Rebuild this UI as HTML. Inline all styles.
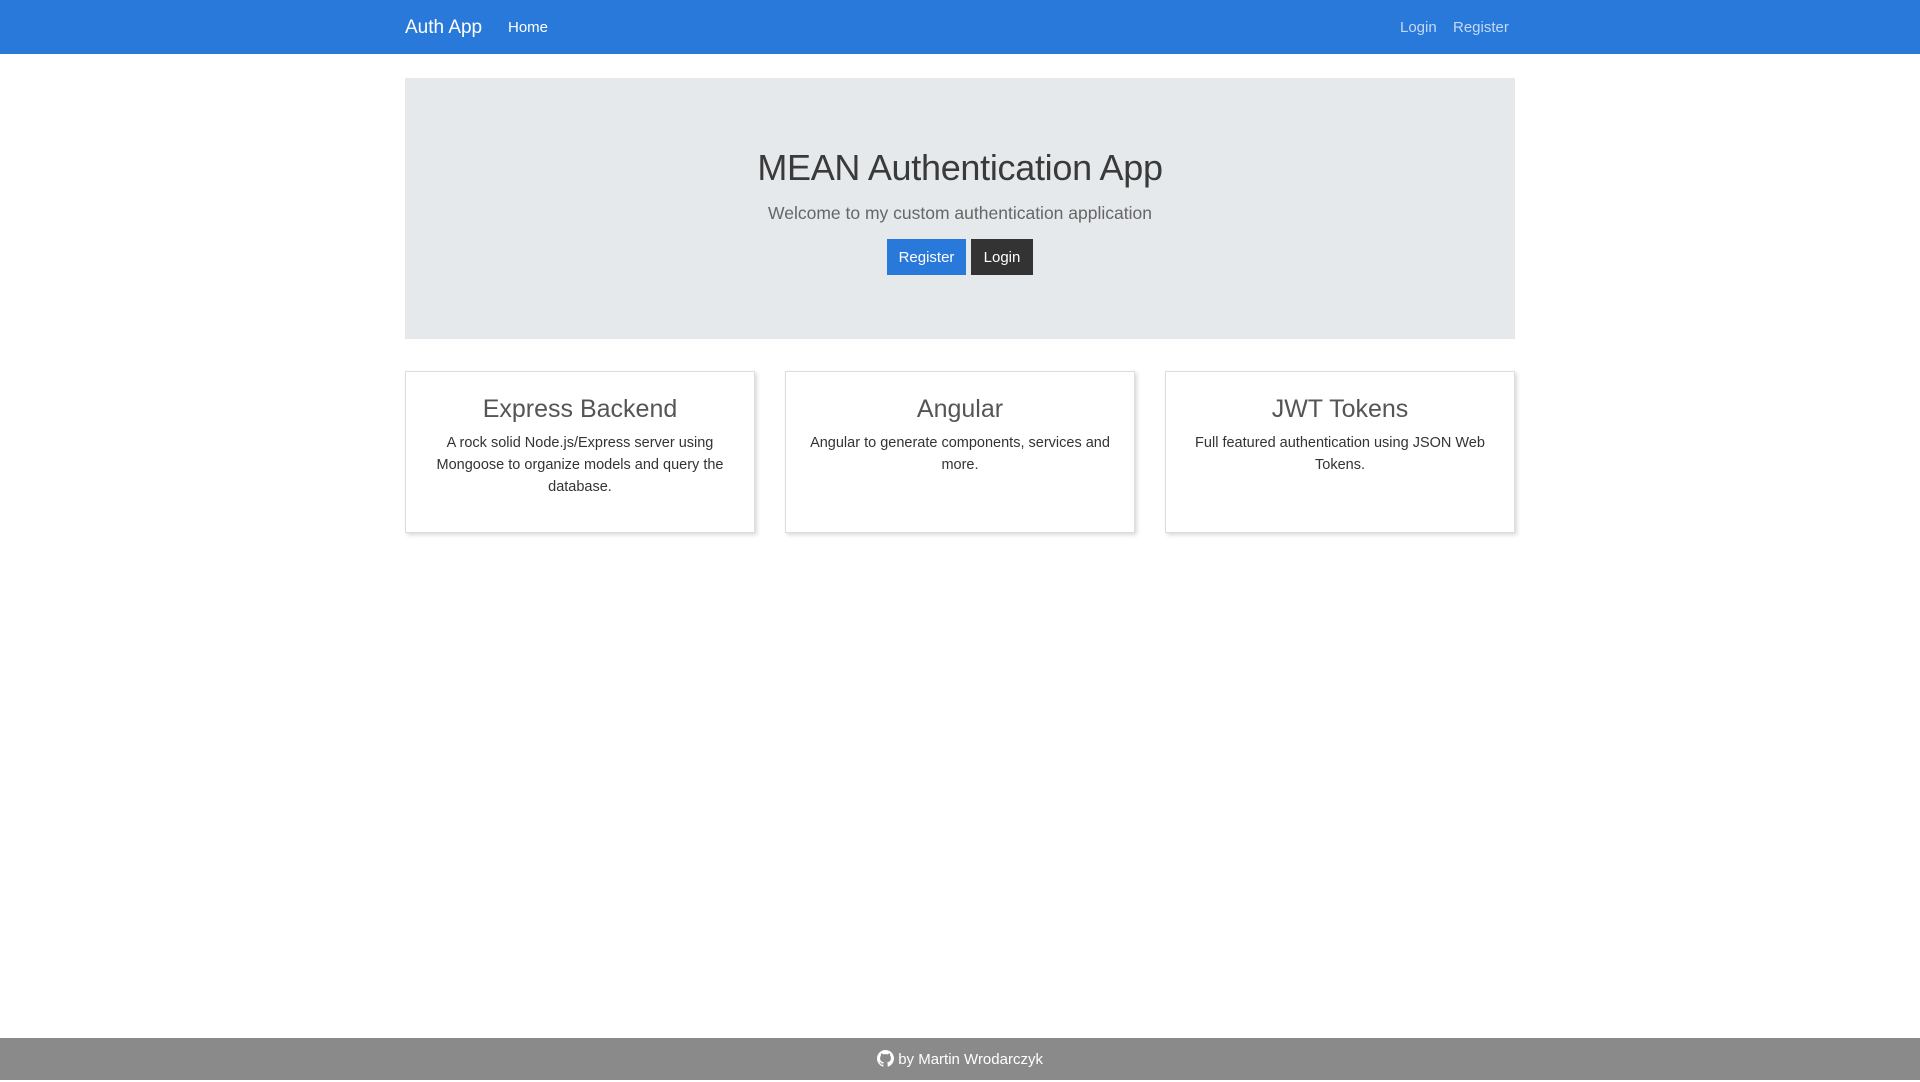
<!DOCTYPE html>
<html><head><meta charset="utf-8"><style>
*{box-sizing:border-box;margin:0;padding:0}
body{width:1920px;height:1080px;position:relative;background:#fff;font-family:"Liberation Sans",sans-serif;color:#333;overflow:hidden}
.nav{position:absolute;left:0;top:0;width:1920px;height:54px;background:#2979db}
.nav span{position:absolute;color:#fff;top:1px;line-height:54px}
.j{position:absolute;left:405px;top:78px;width:1110px;height:261px;background:#e6e9ec;text-align:center}
.j h1{font-weight:normal;font-size:36px;color:#3a3a3a;margin-top:69px;letter-spacing:-0.3px}
.j p{font-size:17.5px;color:#666;margin-top:14px}
.btn{position:absolute;top:161px;height:36px;line-height:37px;color:#fff;font-size:15px;text-align:center}
.card{position:absolute;top:371px;width:350px;height:162px;border:1px solid #ddd;box-shadow:2px 2px 4px rgba(0,0,0,.15);text-align:center;padding:0 22px}
.card h3{font-weight:normal;font-size:25px;color:#555;margin-top:23px}
.card p{font-size:14.5px;line-height:22px;margin-top:8px;color:#333}
.f{position:absolute;left:0;top:1038px;width:1920px;height:42px;background:#8a8a8a;color:#fff;font-size:15px;text-align:center;line-height:44px}
</style></head><body>
<div class="nav">
<span style="left:405px;font-size:19px">Auth App</span>
<span style="left:508px;font-size:15px">Home</span>
<span style="left:1400px;font-size:15px;color:#c4d9f4">Login</span>
<span style="left:1453px;font-size:15px;color:#c4d9f4">Register</span>
</div>
<div class="j">
<h1>MEAN Authentication App</h1>
<p>Welcome to my custom authentication application</p>
<div class="btn" style="left:482px;width:79px;background:#2979db">Register</div>
<div class="btn" style="left:566px;width:62px;background:#333">Login</div>
</div>
<div class="card" style="left:405px"><h3>Express Backend</h3><p>A rock solid Node.js/Express server using Mongoose to organize models and query the database.</p></div>
<div class="card" style="left:785px"><h3>Angular</h3><p>Angular to generate components, services and more.</p></div>
<div class="card" style="left:1165px"><h3>JWT Tokens</h3><p>Full featured authentication using JSON Web Tokens.</p></div>
<div class="f"><svg width="17" height="17" viewBox="0 0 16 16" style="vertical-align:-3px"><path fill="#fff" d="M8 0C3.58 0 0 3.58 0 8c0 3.54 2.29 6.53 5.470 7.59.4.07.55-.17.55-.38 0-.19-.01-.82-.01-1.49-2.01.37-2.53-.49-2.69-.94-.09-.23-.48-.94-.82-1.130-.28-.15-.68-.52-.01-.53.63-.01 1.080.58 1.230.82.72 1.21 1.87.87 2.33.66.07-.52.28-.87.51-1.07-1.78-.2-3.64-.89-3.64-3.95 0-.87.31-1.59.82-2.15-.08-.2-.36-1.02.08-2.12 0 0 .67-.21 2.2.82.64-.18 1.32-.27 2-.27.68 0 1.36.09 2 .27 1.53-1.04 2.2-.82 2.2-.82.44 1.1.16 1.92.08 2.12.51.56.82 1.27.82 2.15 0 3.07-1.87 3.75-3.65 3.95.29.25.54.73.54 1.48 0 1.07-.01 1.93-.01 2.2 0 .21.15.46.55.38A8.013 8.013 0 0016 8c0-4.42-3.58-8-8-8z"/></svg> by Martin Wrodarczyk</div>
</body></html>
